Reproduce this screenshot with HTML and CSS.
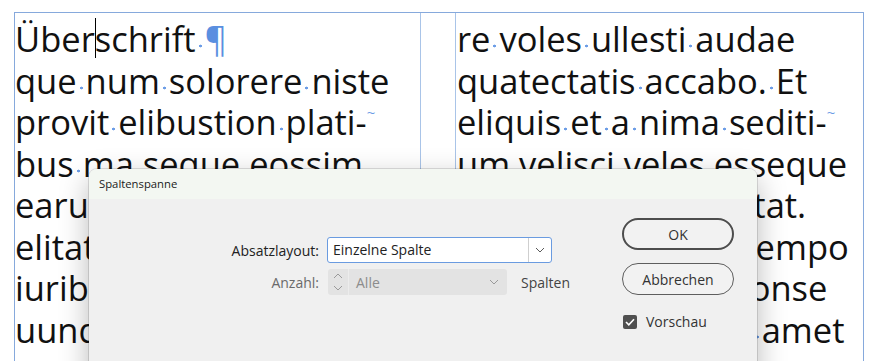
FILE: index.html
```html
<!DOCTYPE html>
<html lang="de">
<head>
  <meta charset="UTF-8" />
  <meta name="viewport" content="width=device-width, initial-scale=1" />
  <title>Spaltenspanne</title>
  <link rel="stylesheet" href="styles.css">
</head>
<body>

  <div class="frame">
    <div class="col col-left">
      <div class="ln">Über<span class="caret"></span>schrift<span class="sp"> </span><span class="pil">¶</span></div>
      <div class="ln">que<span class="sp"> </span>num<span class="sp"> </span>solorere<span class="sp"> </span>niste<span class="sp"> </span></div>
      <div class="ln">provit<span class="sp"> </span>elibustion<span class="sp"> </span>plati-<span class="hy">~</span></div>
      <div class="ln">bus<span class="sp"> </span>ma<span class="sp"> </span>seque<span class="sp"> </span>eossim<span class="sp"> </span></div>
      <div class="ln">earum<span class="sp"> </span>quam<span class="sp"> </span>fugit<span class="sp"> </span>et<span class="sp"> </span></div>
      <div class="ln">elitatem<span class="sp"> </span>aut<span class="sp"> </span>quo<span class="sp"> </span></div>
      <div class="ln">iuribus<span class="sp"> </span>dolo<span class="sp"> </span>cum<span class="sp"> </span></div>
      <div class="ln">uunditi<span class="sp"> </span>am<span class="sp"> </span>sed<span class="sp"> </span></div>
    </div>
    <div class="col col-right">
      <div class="ln">re<span class="sp"> </span>voles<span class="sp"> </span>ullesti<span class="sp"> </span>audae<span class="sp"> </span></div>
      <div class="ln">quatectatis<span class="sp"> </span>accabo.<span class="sp"> </span>Et<span class="sp"> </span></div>
      <div class="ln">eliquis<span class="sp"> </span>et<span class="sp"> </span>a<span class="sp"> </span>nima<span class="sp"> </span>sediti-<span class="hy">~</span></div>
      <div class="ln">um<span class="sp"> </span>velisci<span class="sp"> </span>veles<span class="sp"> </span>esseque<span class="sp"> </span></div>
      <div class="ln">sim<span class="sp"> </span>quis<span class="sp"> </span>pro<span class="sp"> </span>voluptat.<span class="sp"> </span></div>
      <div class="ln">sunt<span class="sp"> </span>harum<span class="sp"> </span>quae<span class="sp"> </span>tempo<span class="sp"> </span></div>
      <div class="ln">cum<span class="sp"> </span>harum<span class="sp"> </span>quid<span class="sp"> </span>conse<span class="sp"> </span></div>
      <div class="ln">dolorem<span class="sp"> </span>ipsum<span class="sp"> </span>sic<span class="sp"> </span>amet<span class="sp"> </span></div>
    </div>
  </div>

  <div class="dialog">
    <div class="titlebar">Spaltenspanne</div>
    <div class="dlg-body">
      <div class="form">
        <span class="lbl">Absatzlayout:</span>
        <div class="select">
          <span class="select-val">Einzelne Spalte</span>
          <span class="select-btn">
            <svg width="10" height="6" viewBox="0 0 10 6"><path d="M1 1l4 4 4-4" fill="none" stroke="#5a5a5a" stroke-width="1"/></svg>
          </span>
        </div>

        <span class="lbl lbl-dis">Anzahl:</span>
        <div class="row-dis">
          <div class="spin">
            <svg width="10" height="6" viewBox="0 0 10 6"><path d="M1 5l4-4 4 4" fill="none" stroke="#9a9a9a" stroke-width="1"/></svg>
            <svg width="10" height="6" viewBox="0 0 10 6"><path d="M1 1l4 4 4-4" fill="none" stroke="#9a9a9a" stroke-width="1"/></svg>
          </div>
          <div class="combo-dis">
            <span>Alle</span>
            <svg width="10" height="6" viewBox="0 0 10 6"><path d="M1 1l4 4 4-4" fill="none" stroke="#9a9a9a" stroke-width="1"/></svg>
          </div>
          <span class="unit">Spalten</span>
        </div>
      </div>

      <div class="actions">
        <button class="btn btn-ok">OK</button>
        <button class="btn">Abbrechen</button>
        <label class="check">
          <span class="box">
            <svg width="10" height="8" viewBox="0 0 10 8"><path d="M1 4l2.8 2.8L9 1.2" fill="none" stroke="#fff" stroke-width="1.6"/></svg>
          </span>
          Vorschau
        </label>
      </div>
    </div>
  </div>

</body>
</html>
```

FILE: styles.css
```css
body {
  margin: 0;
  padding: 12px 0 0 14px;
  background: #fff;
  overflow: hidden;
  height: 361px;
  box-sizing: border-box;
}

/* Textrahmen mit zwei Spalten */
.frame {
  display: grid;
  grid-template-columns: 406px 34px 406px;
  width: 848px;
  height: 400px;
  border: 1px solid #86a9dc;
  font-family: 'Open Sans', sans-serif;
  font-size: 34.5px;
  line-height: 41.5px;
  color: #111;
}

.col {
  padding-top: 5px;
  white-space: nowrap;
  overflow: hidden;
}

.col-left {
  border-right: 1px solid #a9c4e8;
}

.col-right {
  grid-column: 3;
  border-left: 1px solid #a9c4e8;
  padding-left: 1px;
}

.sp {
  background-image: radial-gradient(circle at 50% 31px, #6b9ce6 0 1.1px, transparent 1.7px);
  background-repeat: no-repeat;
}

.pil {
  color: #5a8fe0;
}

.hy {
  color: #6b9ce6;
  font-size: 15px;
  line-height: 0;
  vertical-align: 17px;
}

.caret {
  display: inline-block;
  width: 1px;
  height: 40px;
  margin-right: -1px;
  background: #000;
  vertical-align: -6px;
}

/* Dialog */
.dialog {
  position: absolute;
  left: 89px;
  top: 169px;
  width: 668px;
  height: 230px;
  background: #f0f0f0;
  border-radius: 8px 8px 0 0;
  box-shadow: 0 0 0 1px rgba(0,0,0,0.12), 0 10px 30px rgba(0,0,0,0.28);
  font-family: 'Open Sans', sans-serif;
  font-size: 14px;
  color: #222;
  overflow: hidden;
}

.titlebar {
  height: 30px;
  line-height: 30px;
  padding-left: 10px;
  background: #f3f7f2;
  font-size: 11.3px;
  color: #1a1a1a;
}

.dlg-body {
  display: flex;
  align-items: flex-start;
}

.form {
  display: grid;
  grid-template-columns: 110px 226px;
  grid-auto-rows: 26px;
  column-gap: 8px;
  row-gap: 6px;
  margin: 38px 0 0 120px;
  align-items: center;
}

.lbl {
  text-align: right;
}

.lbl-dis {
  color: #6a6a6a;
}

.select {
  display: flex;
  height: 26px;
  width: 225px;
  box-sizing: border-box;
  background: #fff;
  border: 1px solid #6a9be0;
  border-radius: 3px;
}

.select-val {
  flex: 1;
  line-height: 24px;
  padding-left: 5px;
}

.select-btn {
  width: 22px;
  border-left: 1px solid #cfcfcf;
  display: flex;
  align-items: center;
  justify-content: center;
}

.row-dis {
  display: flex;
  align-items: center;
  white-space: nowrap;
  padding-left: 1px;
}

.row-dis > * {
  flex: none;
}

.spin {
  width: 20px;
  height: 26px;
  background: #e3e3e3;
  border-right: 1px solid #ececec;
  border-radius: 3px 0 0 3px;
  display: flex;
  flex-direction: column;
  align-items: center;
  justify-content: center;
  gap: 6px;
}

.combo-dis {
  width: 158px;
  height: 26px;
  box-sizing: border-box;
  background: #e3e3e3;
  border-radius: 0 3px 3px 0;
  display: flex;
  align-items: center;
  justify-content: space-between;
  padding: 0 8px 0 7px;
  color: #8c8c8c;
}

.unit {
  margin-left: 14px;
  color: #444;
}

.actions {
  display: flex;
  flex-direction: column;
  width: 112px;
  margin: 19px 0 0 69px;
}

.btn {
  height: 32px;
  box-sizing: border-box;
  border: 1px solid #5e5e5e;
  border-radius: 16px;
  background: #f2f2f2;
  font-family: 'Open Sans', sans-serif;
  font-size: 14px;
  color: #333;
  padding: 0;
}

.btn + .btn {
  margin-top: 13px;
}

.btn-ok {
  border: 2px solid #4d4d4d;
}

.check {
  display: flex;
  align-items: center;
  gap: 9px;
  margin: 17px 0 0 1px;
  color: #333;
}

.box {
  width: 14px;
  height: 14px;
  background: #505050;
  border-radius: 2px;
  display: flex;
  align-items: center;
  justify-content: center;
}
```
